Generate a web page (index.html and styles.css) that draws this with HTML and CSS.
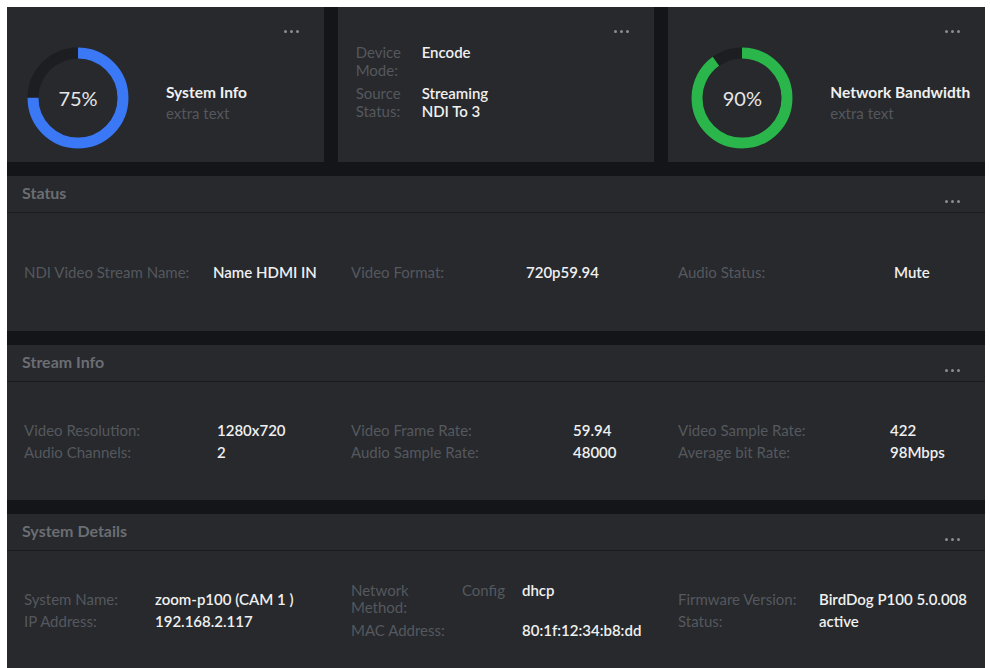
FILE: index.html
```html
<!DOCTYPE html>
<html lang="en">
<head>
  <meta charset="UTF-8" />
  <meta name="viewport" content="width=device-width, initial-scale=1.0" />
  <title>Device Dashboard</title>
  <link rel="stylesheet" href="styles.css">
</head>
<body>
  <div class="dashboard">
    <div class="cards">
      <div class="card">
        <div class="card-top"><span class="dots"><i></i><i></i><i></i></span></div>
        <div class="card-body">
          <div class="ring">
            <svg viewBox="0 0 102 102" width="102" height="102">
              <circle class="track" cx="51" cy="51" r="45" />
              <circle class="arc blue" cx="51" cy="51" r="45" stroke-dasharray="212.06 282.74" />
            </svg>
            <span class="ring-value">75%</span>
          </div>
          <div class="card-title">
            <strong>System Info</strong>
            <span>extra text</span>
          </div>
        </div>
      </div>

      <div class="card">
        <div class="card-top"><span class="dots"><i></i><i></i><i></i></span></div>
        <div class="mode-grid">
          <span class="label">Device Mode:</span>
          <span class="value">Encode</span>
          <span class="label">Source Status:</span>
          <span class="value">Streaming<br>NDI To 3</span>
        </div>
      </div>

      <div class="card">
        <div class="card-top"><span class="dots"><i></i><i></i><i></i></span></div>
        <div class="card-body">
          <div class="ring">
            <svg viewBox="0 0 102 102" width="102" height="102">
              <circle class="track" cx="51" cy="51" r="45" />
              <circle class="arc green" cx="51" cy="51" r="45" stroke-dasharray="254.47 282.74" />
            </svg>
            <span class="ring-value">90%</span>
          </div>
          <div class="card-title">
            <strong>Network Bandwidth</strong>
            <span>extra text</span>
          </div>
        </div>
      </div>
    </div>

    <section class="panel">
      <div class="panel-head">
        <h2>Status</h2>
        <span class="dots"><i></i><i></i><i></i></span>
      </div>
      <div class="panel-body">
        <div class="group" style="grid-template-columns: 189px 1fr">
          <span class="label">NDI Video Stream Name:</span><span class="value">Name HDMI IN</span>
        </div>
        <div class="group" style="grid-template-columns: 175px 1fr">
          <span class="label">Video Format:</span><span class="value">720p59.94</span>
        </div>
        <div class="group" style="grid-template-columns: 216px 1fr">
          <span class="label">Audio Status:</span><span class="value">Mute</span>
        </div>
      </div>
    </section>

    <section class="panel">
      <div class="panel-head">
        <h2>Stream Info</h2>
        <span class="dots"><i></i><i></i><i></i></span>
      </div>
      <div class="panel-body">
        <div class="group" style="grid-template-columns: 193px 1fr">
          <span class="label">Video Resolution:</span><span class="value">1280x720</span>
          <span class="label">Audio Channels:</span><span class="value">2</span>
        </div>
        <div class="group" style="grid-template-columns: 222px 1fr">
          <span class="label">Video Frame Rate:</span><span class="value">59.94</span>
          <span class="label">Audio Sample Rate:</span><span class="value">48000</span>
        </div>
        <div class="group" style="grid-template-columns: 212px 1fr">
          <span class="label">Video Sample Rate:</span><span class="value">422</span>
          <span class="label">Average bit Rate:</span><span class="value">98Mbps</span>
        </div>
      </div>
    </section>

    <section class="panel">
      <div class="panel-head">
        <h2>System Details</h2>
        <span class="dots"><i></i><i></i><i></i></span>
      </div>
      <div class="panel-body">
        <div class="group" style="grid-template-columns: 131px 1fr">
          <span class="label">System Name:</span><span class="value">zoom-p100 (CAM 1 )</span>
          <span class="label">IP Address:</span><span class="value">192.168.2.117</span>
        </div>
        <div class="group network" style="grid-template-columns: 111px 60px 1fr">
          <span class="label narrow">Network Method:</span>
          <span class="label">Config</span>
          <span class="value">dhcp</span>
          <span class="label wide">MAC Address:</span>
          <span class="value">80:1f:12:34:b8:dd</span>
        </div>
        <div class="group" style="grid-template-columns: 141px 1fr">
          <span class="label">Firmware Version:</span><span class="value">BirdDog P100 5.0.008</span>
          <span class="label">Status:</span><span class="value">active</span>
        </div>
      </div>
    </section>
  </div>
</body>
</html>
```

FILE: styles.css
```css
body {
  margin: 0;
  background-color: #fff;
  font-family: Lato, "Open Sans", sans-serif;
  color: #f0f0f0;
}
.dashboard {
  margin: 7px 5px 0 7px;
  background-color: #131518;
  display: flex;
  flex-direction: column;
  gap: 14px;
  height: 661px;
  overflow: hidden;
}
.cards {
  display: grid;
  grid-template-columns: repeat(3, minmax(0, 1fr));
  gap: 14px;
}
.card {
  background-color: #27292d;
  height: 155px;
  box-sizing: border-box;
  padding: 14px 25px 0 20px;
  display: flex;
  flex-direction: column;
}
.card:last-child {
  padding-left: 23px;
}
.card-top {
  height: 26px;
  display: flex;
  justify-content: flex-end;
}
.dots {
  display: flex;
  gap: 3px;
  margin-top: 9px;
}
.dots i {
  width: 3px;
  height: 3px;
  border-radius: 50%;
  background-color: #8a8d92;
}
.card-body {
  display: flex;
  align-items: center;
  gap: 37px;
}
.ring {
  display: grid;
  place-items: center;
  flex-shrink: 0;
  width: 102px;
  height: 102px;
}
.ring svg,
.ring-value {
  grid-area: 1 / 1;
}
.ring svg {
  transform: rotate(-90deg);
}
.ring circle {
  fill: none;
  stroke-width: 11;
}
.ring .track {
  stroke: #1c1e21;
}
.ring .blue {
  stroke: #3b78f5;
}
.ring .green {
  stroke: #2bb64c;
}
.ring-value {
  font-size: 20px;
  color: #e6e6e6;
}
.card-title {
  display: flex;
  flex-direction: column;
  margin-top: 10px;
  white-space: nowrap;
}
.card-title strong {
  font-size: 15.5px;
  font-weight: 700;
  line-height: 20px;
}
.card-title span {
  font-size: 15px;
  color: #54575c;
  line-height: 22px;
}
.label {
  color: #55585d;
  font-size: 15px;
}
.value {
  font-size: 15px;
  font-weight: 600;
}
.mode-grid {
  display: grid;
  grid-template-columns: 66px 1fr;
  row-gap: 5px;
  line-height: 18px;
  margin-top: -4px;
  margin-left: -2px;
}
.mode-grid .label {
  width: 54px;
}
.panel {
  background-color: #27292d;
  flex-shrink: 0;
  height: 155px;
  display: flex;
  flex-direction: column;
}
.panel-head {
  height: 36px;
  padding: 0 25px 0 15px;
  display: flex;
  justify-content: space-between;
  border-bottom: 1px solid #1a1c1f;
}
.panel-head h2 {
  margin: 7px 0 0;
  font-size: 16px;
  font-weight: 700;
  color: #6b6e73;
}
.panel-head .dots {
  margin-top: 24px;
}
.panel-body {
  flex: 1;
  display: flex;
  align-items: center;
  padding-left: 17px;
}
.group {
  display: grid;
  flex: 0 0 327px;
  line-height: 22px;
}
.group:last-child {
  flex: 1;
}
.network {
  line-height: 17px;
  row-gap: 6px;
  align-items: start;
}
.network .narrow {
  max-width: 70px;
}
.network .wide {
  grid-column: span 2;
}
```
